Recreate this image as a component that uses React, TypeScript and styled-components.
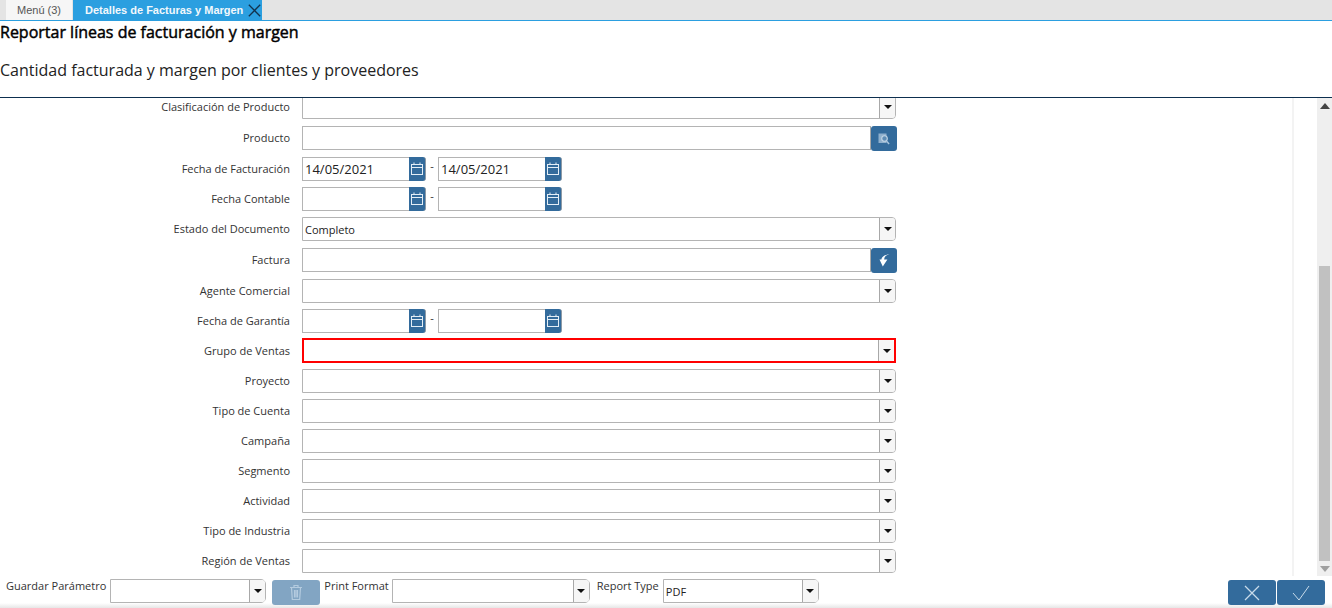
import React from "react"
import styled, { createGlobalStyle } from "styled-components"

const GlobalStyle = createGlobalStyle`
  html, body {
    margin: 0;
    padding: 0;
    background: #fff;
    overflow: hidden;
  }
`

const Page = styled.div`
  width: 1332px;
  height: 608px;
  display: flex;
  flex-direction: column;
  overflow: hidden;
  font-family: "Open Sans", sans-serif;
  color: #333;
`

const TabBar = styled.div`
  flex: none;
  height: 20px;
  display: flex;
  padding-left: 6px;
  gap: 1px;
  background: #e4e4e4;
  border-bottom: 1px solid #2b9fe0;
`

const Tab = styled.div<{ $active?: boolean }>`
  height: 20px;
  display: flex;
  align-items: center;
  box-sizing: border-box;
  font-family: "Liberation Sans", Arial, sans-serif;
  font-size: 11px;
  font-weight: ${(p) => (p.$active ? 700 : 400)};
  color: ${(p) => (p.$active ? "#f2f8fc" : "#555")};
  background: ${(p) => (p.$active ? "#2b9fe0" : "#f6f6f6")};
  width: ${(p) => (p.$active ? "189px" : "66px")};
  padding-left: ${(p) => (p.$active ? "12px" : "11px")};
  gap: 5px;
`

const Header = styled.div`
  flex: none;
  height: 76px;
  display: flex;
  flex-direction: column;
  color: #111;
`

const Title = styled.div`
  font-size: 16px;
  font-weight: 400;
  line-height: 22px;
  color: #000;
  -webkit-text-stroke: 0.45px #000;
`

const Subtitle = styled.div`
  font-size: 16px;
  line-height: 22px;
  margin-top: 16px;
  color: #222;
`

const Content = styled.div`
  flex: none;
  height: 478px;
  display: flex;
  border-top: 1px solid #0d2f4f;
  overflow: hidden;
`

const FormArea = styled.div`
  flex: none;
  width: 1292px;
  border-right: 2px solid #f3f3f3;
  overflow: hidden;
`

const Gutter = styled.div`
  flex: 1;
`

const Scrollbar = styled.div`
  flex: none;
  width: 15px;
  display: flex;
  flex-direction: column;
  align-items: center;
  background: #efefef;
`

const ArrowButton = styled.div`
  flex: none;
  height: 15px;
  width: 100%;
  display: flex;
  align-items: center;
  justify-content: center;
`

const Track = styled.div`
  flex: 1;
  width: 11px;
  display: flex;
  flex-direction: column;
  justify-content: flex-end;
`

const Thumb = styled.div`
  height: 295px;
  background: #c1c1c1;
`

const Form = styled.div`
  display: flex;
  flex-direction: column;
  gap: 6px;
  margin-top: -3px;
`

const Row = styled.div<{ $lookup?: boolean }>`
  display: flex;
  align-items: flex-start;
  height: ${(p) => (p.$lookup ? "25px" : "24px")};
  margin-top: ${(p) => (p.$lookup ? "1px" : "0")};
`

const Label = styled.div`
  width: 290px;
  margin-right: 12px;
  flex: none;
  text-align: right;
  font-size: 11px;
  line-height: 23px;
  color: #333;
  white-space: nowrap;
`

const Combo = styled.div<{ $width?: number; $error?: boolean }>`
  flex: none;
  box-sizing: border-box;
  width: ${(p) => p.$width ?? 594}px;
  height: ${(p) => (p.$error ? "25px" : "24px")};
  margin-top: ${(p) => (p.$error ? "-1px" : "0")};
  display: flex;
  background: #fff;
  border: ${(p) => (p.$error ? "2px solid #f00" : "1px solid #b4b4b4")};
  border-radius: ${(p) => (p.$error ? "0" : "0 4px 4px 0")};
`

const ComboText = styled.div`
  flex: 1;
  font-size: 11px;
  line-height: 23px;
  padding-left: 2px;
  color: #222;
`

const ComboButton = styled.div`
  flex: none;
  width: 16px;
  display: flex;
  align-items: center;
  justify-content: center;
  box-sizing: border-box;
  background: #f6f6f6;
  border-left: 1px solid #a8a8a8;
  border-radius: 0 3px 3px 0;
`

const Caret = styled.span`
  width: 0;
  height: 0;
  border-left: 4px solid transparent;
  border-right: 4px solid transparent;
  border-top: 4px solid #111;
`

const TextBox = styled.div`
  flex: none;
  box-sizing: border-box;
  width: 569px;
  height: 24px;
  border: 1px solid #b4b4b4;
  border-right: 1px solid #a8a8a8;
`

const IconButton = styled.div`
  flex: none;
  width: 26px;
  height: 25px;
  display: flex;
  align-items: center;
  justify-content: center;
  background: #336b9c;
  border-radius: 3px;
`

const DateGroup = styled.div`
  display: flex;
  align-items: flex-start;
`

const DateInput = styled.div`
  flex: none;
  box-sizing: border-box;
  width: 107px;
  height: 24px;
  border: 1px solid #b4b4b4;
  border-right: none;
  font-size: 13px;
  line-height: 22px;
  padding-left: 2px;
  color: #222;
`

const DateButton = styled.div`
  flex: none;
  box-sizing: border-box;
  width: 17px;
  height: 24px;
  display: flex;
  align-items: center;
  justify-content: center;
  background: #336b9c;
  border-right: 1px solid #8d9aa6;
  border-radius: 0 3px 3px 0;
`

const Dash = styled.div`
  flex: none;
  width: 12px;
  text-align: center;
  font-size: 11px;
  line-height: 18px;
  color: #333;
`

const Footer = styled.div`
  flex: none;
  height: 32px;
  box-sizing: border-box;
  display: flex;
  align-items: flex-start;
  padding: 3px 7px 0 6px;
  background: linear-gradient(to bottom, #fff 0, #fff 27px, #e6e6e6 32px);
`

const FooterLabel = styled.div<{ $gap: number }>`
  flex: none;
  font-size: 11px;
  line-height: 14px;
  margin-right: ${(p) => p.$gap}px;
  color: #333;
`

const FooterCombo = styled(Combo)<{ $after: number }>`
  margin-right: ${(p) => p.$after}px;
  border-radius: 0 5px 5px 0;
`

const FooterComboText = styled(ComboText)`
  line-height: 24px;
`

const ActionButton = styled.div<{ $disabled?: boolean }>`
  flex: none;
  width: 48px;
  height: 25px;
  margin-top: 1px;
  display: flex;
  align-items: center;
  justify-content: center;
  background: ${(p) => (p.$disabled ? "#82a5c3" : "#336b9c")};
  border-radius: 3px;
`

const TrashButton = styled(ActionButton)`
  margin-right: 4px;
`

const Spacer = styled.div`
  flex: 1;
`

const Actions = styled.div`
  display: flex;
  gap: 1px;
`

const CalendarIcon = () => (
  <svg width="12" height="14" viewBox="0 0 12 14" fill="none" stroke="#e4eef6" strokeWidth="1">
    <rect x="0.5" y="2.5" width="11" height="10" />
    <path d="M0.5 5.5h11M3 0.5v2M9 0.5v2" />
  </svg>
)

const SearchIcon = () => (
  <svg width="12" height="12" viewBox="0 0 12 12">
    <rect x="0.5" y="0.5" width="8" height="9.5" fill="#8fb0cd" />
    <circle cx="6.5" cy="5.5" r="2.8" fill="#5f8db5" stroke="#c3d6e6" strokeWidth="1.1" />
    <path d="M8.5 8l2.6 3" stroke="#a9c4dc" strokeWidth="1.4" fill="none" />
  </svg>
)

const BackIcon = () => (
  <svg width="11" height="13" viewBox="0 0 11 13" fill="#fff">
    <path d="M10.5 0.5 C7 1 5.4 2.6 5.1 5.4 H8.4 L3.8 12.5 L0.5 5.4 H2.4 C2.8 2.6 6 0.4 10.5 0.5 Z" />
  </svg>
)

const TrashIcon = () => (
  <svg width="14" height="17" viewBox="0 0 14 17" fill="none" stroke="#b4cbdf" strokeWidth="1.2">
    <path d="M1 3.5h12M5 3.5V1.5h4v2M2.5 3.5l.8 12h7.4l.8-12M5.5 6v7.5M7 6v7.5M8.5 6v7.5" />
  </svg>
)

const CloseIcon = ({ size, color }: { size: number; color: string }) => (
  <svg width={size} height={size} viewBox="0 0 16 16" fill="none" stroke={color} strokeWidth={20 / size}>
    <path d="M1 1l14 14M15 1L1 15" />
  </svg>
)

const CheckIcon = () => (
  <svg width="18" height="16" viewBox="0 0 18 16" fill="none" stroke="#c8dbea" strokeWidth="1">
    <path d="M1 8l6 7L17 1" />
  </svg>
)

const ComboField = ({ value, error }: { value?: string; error?: boolean }) => (
  <Combo $error={error}>
    <ComboText>{value}</ComboText>
    <ComboButton>
      <Caret />
    </ComboButton>
  </Combo>
)

const DateField = ({ value }: { value?: string }) => (
  <DateGroup>
    <DateInput>{value}</DateInput>
    <DateButton>
      <CalendarIcon />
    </DateButton>
  </DateGroup>
)

const DateRange = ({ value }: { value?: string }) => (
  <DateGroup>
    <DateField value={value} />
    <Dash>-</Dash>
    <DateField value={value} />
  </DateGroup>
)

export default function App() {
  return (
    <Page>
      <GlobalStyle />
      <TabBar>
        <Tab>Menú (3)</Tab>
        <Tab $active>
          Detalles de Facturas y Margen
          <CloseIcon size={13} color="#12324c" />
        </Tab>
      </TabBar>
      <Header>
        <Title>Reportar líneas de facturación y margen</Title>
        <Subtitle>Cantidad facturada y margen por clientes y proveedores</Subtitle>
      </Header>
      <Content>
        <FormArea>
          <Form>
            <Row>
              <Label>Clasificación de Producto</Label>
              <ComboField />
            </Row>
            <Row $lookup>
              <Label>Producto</Label>
              <TextBox />
              <IconButton>
                <SearchIcon />
              </IconButton>
            </Row>
            <Row>
              <Label>Fecha de Facturación</Label>
              <DateRange value="14/05/2021" />
            </Row>
            <Row>
              <Label>Fecha Contable</Label>
              <DateRange />
            </Row>
            <Row>
              <Label>Estado del Documento</Label>
              <ComboField value="Completo" />
            </Row>
            <Row $lookup>
              <Label>Factura</Label>
              <TextBox />
              <IconButton>
                <BackIcon />
              </IconButton>
            </Row>
            <Row>
              <Label>Agente Comercial</Label>
              <ComboField />
            </Row>
            <Row>
              <Label>Fecha de Garantía</Label>
              <DateRange />
            </Row>
            <Row>
              <Label>Grupo de Ventas</Label>
              <ComboField error />
            </Row>
            {["Proyecto", "Tipo de Cuenta", "Campaña", "Segmento", "Actividad", "Tipo de Industria", "Región de Ventas"].map(
              (name) => (
                <Row key={name}>
                  <Label>{name}</Label>
                  <ComboField />
                </Row>
              ),
            )}
          </Form>
        </FormArea>
        <Gutter />
        <Scrollbar>
          <ArrowButton>
            <svg width="10" height="6" viewBox="0 0 10 6" fill="#444">
              <path d="M5 0l5 6H0z" />
            </svg>
          </ArrowButton>
          <Track>
            <Thumb />
          </Track>
          <ArrowButton>
            <svg width="10" height="6" viewBox="0 0 10 6" fill="#a0a0a0">
              <path d="M5 6L0 0h10z" />
            </svg>
          </ArrowButton>
        </Scrollbar>
      </Content>
      <Footer>
        <FooterLabel $gap={4}>Guardar Parámetro</FooterLabel>
        <FooterCombo $width={156} $after={6}>
          <FooterComboText />
          <ComboButton>
            <Caret />
          </ComboButton>
        </FooterCombo>
        <TrashButton $disabled>
          <TrashIcon />
        </TrashButton>
        <FooterLabel $gap={3}>Print Format</FooterLabel>
        <FooterCombo $width={198} $after={7}>
          <FooterComboText />
          <ComboButton>
            <Caret />
          </ComboButton>
        </FooterCombo>
        <FooterLabel $gap={4}>Report Type</FooterLabel>
        <FooterCombo $width={156} $after={0}>
          <FooterComboText>PDF</FooterComboText>
          <ComboButton>
            <Caret />
          </ComboButton>
        </FooterCombo>
        <Spacer />
        <Actions>
          <ActionButton>
            <CloseIcon size={16} color="#c8dbea" />
          </ActionButton>
          <ActionButton>
            <CheckIcon />
          </ActionButton>
        </Actions>
      </Footer>
    </Page>
  )
}
